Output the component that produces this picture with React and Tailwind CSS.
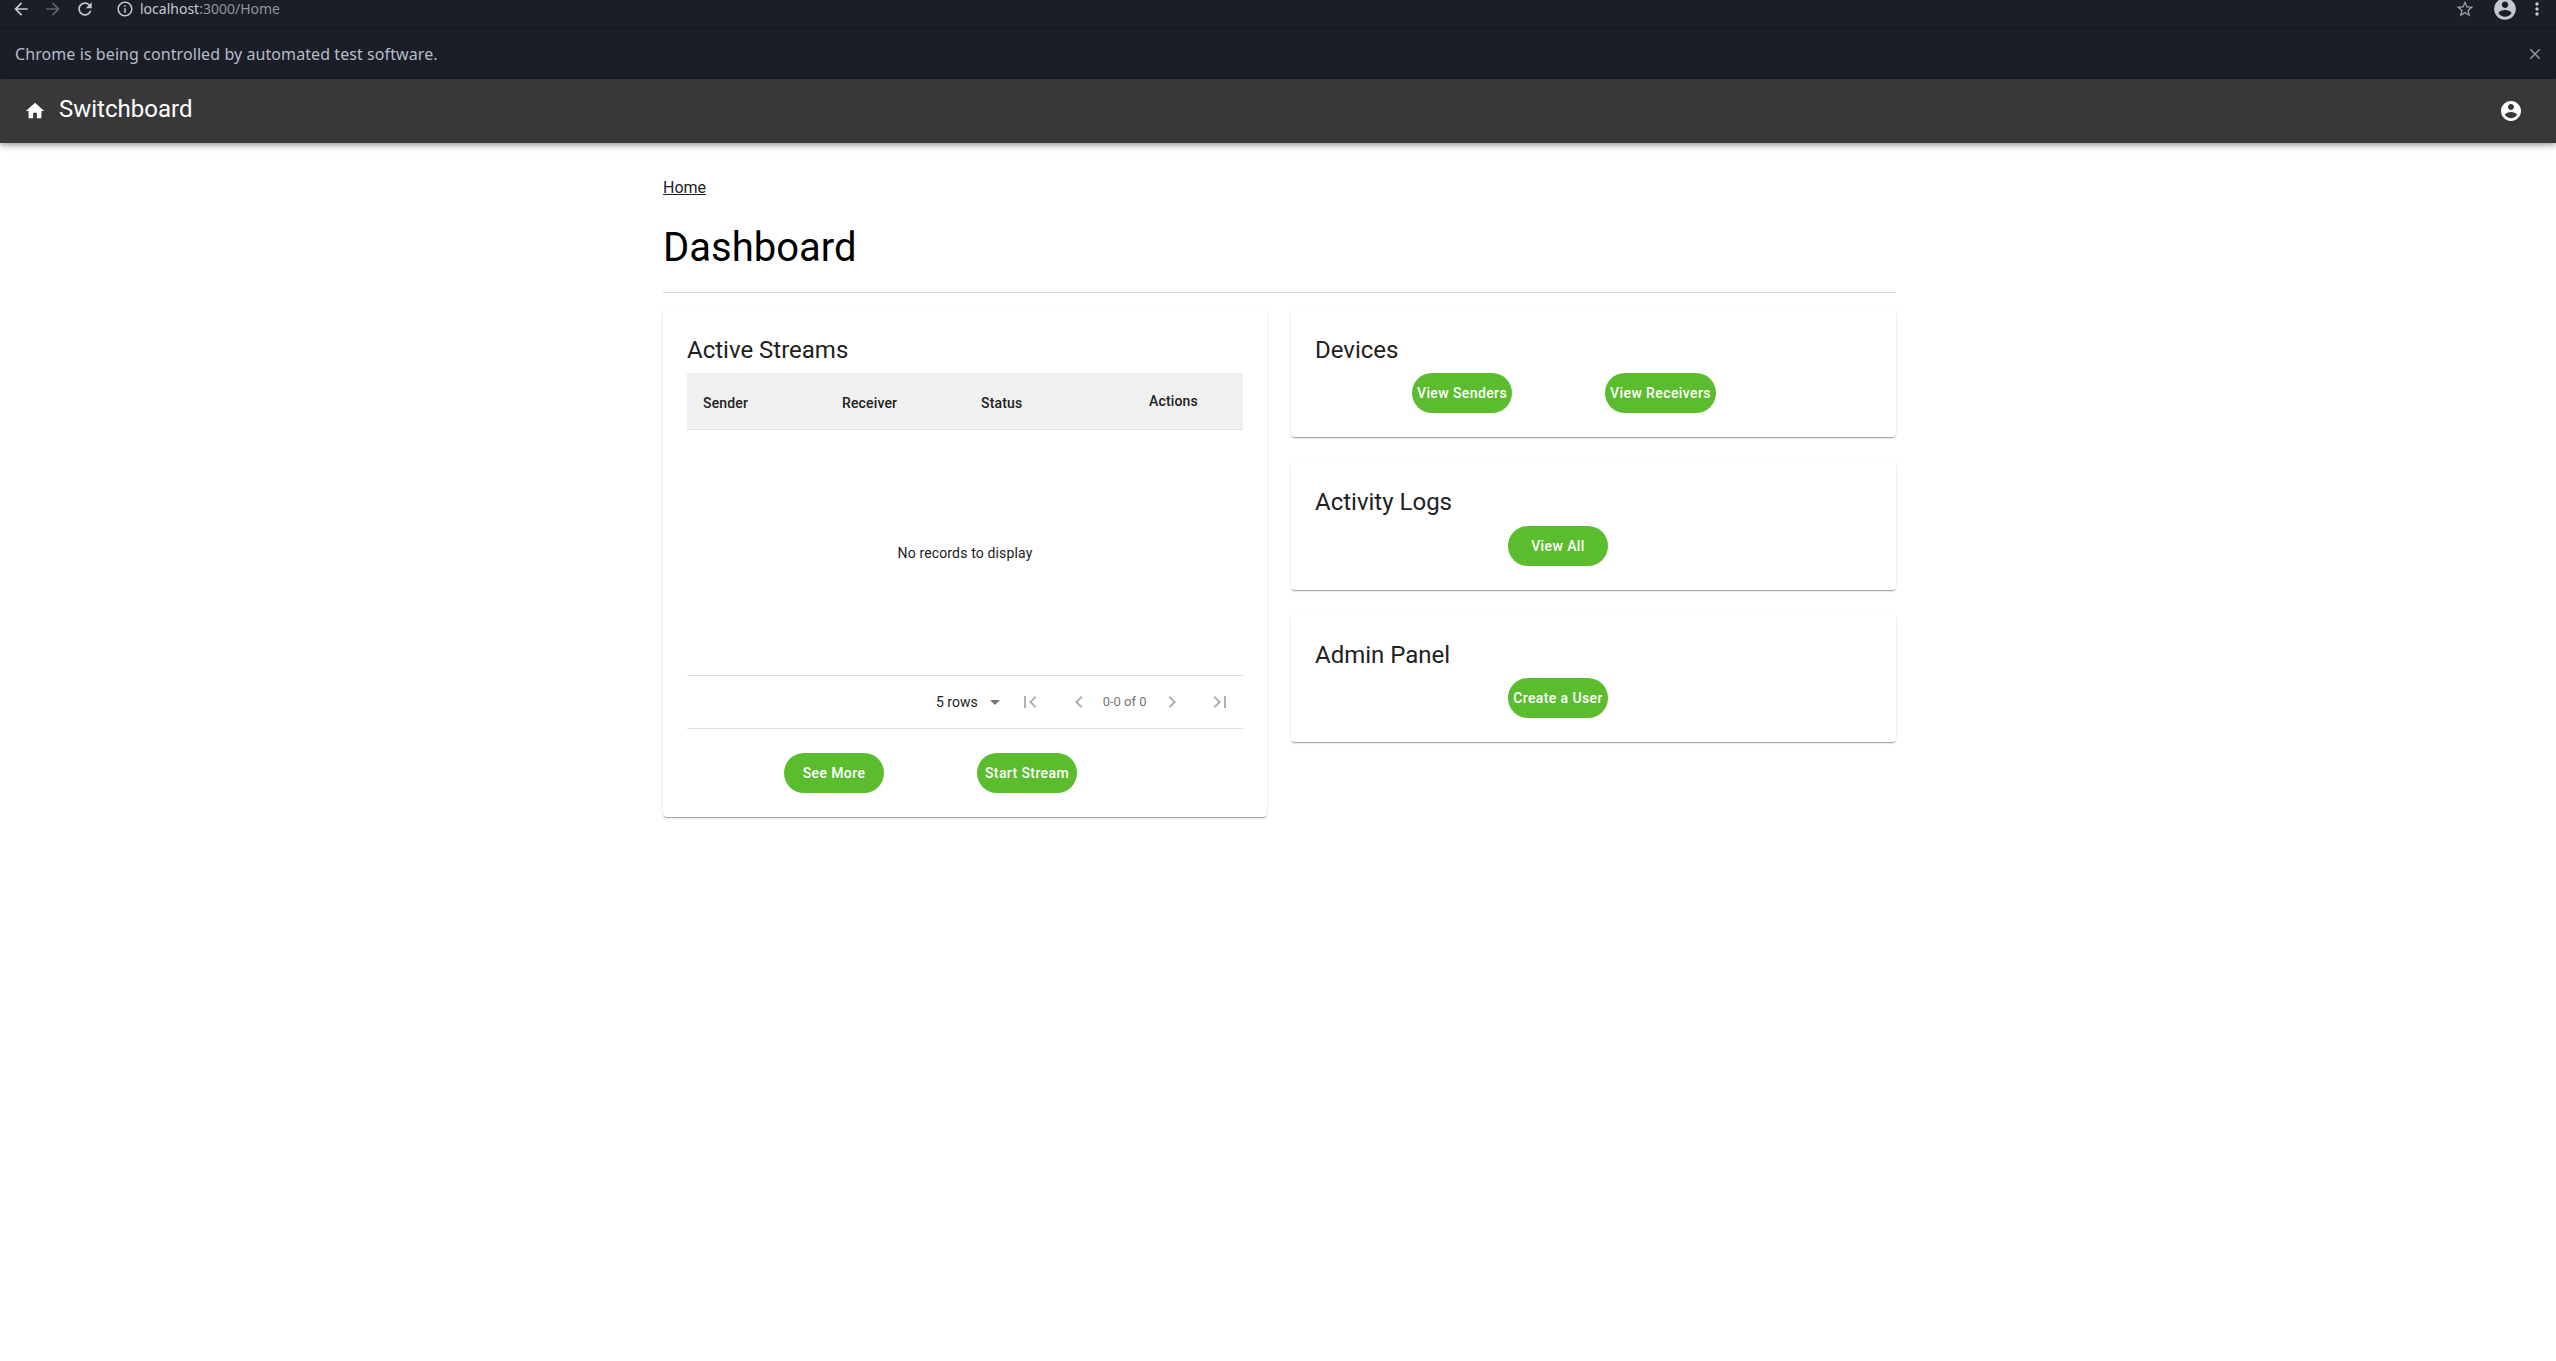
const paths = {
  back: "M20 11H7.83l5.59-5.59L12 4l-8 8 8 8 1.41-1.41L7.83 13H20v-2z",
  reload:
    "M17.65 6.35C16.2 4.9 14.21 4 12 4c-4.42 0-7.99 3.58-7.99 8s3.57 8 7.99 8c3.73 0 6.84-2.55 7.73-6h-2.08c-.82 2.33-3.04 4-5.65 4-3.31 0-6-2.69-6-6s2.69-6 6-6c1.66 0 3.14.69 4.22 1.78L13 11h7V4l-2.35 2.35z",
  info: "M11 7h2v2h-2zm0 4h2v6h-2zm1-9C6.48 2 2 6.48 2 12s4.48 10 10 10 10-4.48 10-10S17.52 2 12 2zm0 18c-4.41 0-8-3.59-8-8s3.59-8 8-8 8 3.59 8 8-3.59 8-8 8z",
  star: "M22 9.24l-7.19-.62L12 2 9.19 8.63 2 9.24l5.46 4.73L5.82 21 12 17.27 18.18 21l-1.63-7.03L22 9.24zM12 15.4l-3.76 2.27 1-4.28-3.32-2.88 4.38-.38L12 6.1l1.71 4.04 4.38.38-3.32 2.88 1 4.28L12 15.4z",
  dots: "M12 8c1.1 0 2-.9 2-2s-.9-2-2-2-2 .9-2 2 .9 2 2 2zm0 2c-1.1 0-2 .9-2 2s.9 2 2 2 2-.9 2-2-.9-2-2-2zm0 6c-1.1 0-2 .9-2 2s.9 2 2 2 2-.9 2-2-.9-2-2-2z",
  close:
    "M19 6.41L17.59 5 12 10.59 6.41 5 5 6.41 10.59 12 5 17.59 6.41 19 12 13.41 17.59 19 19 17.59 13.41 12z",
  home: "M10 20v-6h4v6h5v-8h3L12 3 2 12h3v8z",
  account:
    "M12 2C6.48 2 2 6.48 2 12s4.48 10 10 10 10-4.48 10-10S17.52 2 12 2zm0 3c1.66 0 3 1.34 3 3s-1.34 3-3 3-3-1.34-3-3 1.34-3 3-3zm0 14.2c-2.5 0-4.71-1.28-6-3.22.03-1.99 4-3.08 6-3.08 1.99 0 5.97 1.09 6 3.08-1.29 1.94-3.5 3.22-6 3.22z",
  first: "M18.41 16.59L13.82 12l4.59-4.59L17 6l-6 6 6 6zM6 6h2v12H6z",
  prev: "M15.41 7.41L14 6l-6 6 6 6 1.41-1.41L10.83 12z",
  next: "M10 6L8.59 7.41 13.17 12l-4.58 4.59L10 18l6-6z",
  last: "M5.59 7.41L10.18 12l-4.59 4.59L7 18l6-6-6-6zM16 6h2v12h-2z",
  drop: "M7 10l5 5 5-5z",
};

const Icon = ({ name, className }) => (
  <svg viewBox="0 0 24 24" fill="currentColor" className={className}>
    <path d={paths[name]} />
  </svg>
);

const GreenButton = ({ children, className = "" }) => (
  <button
    className={`h-10 rounded-[20px] bg-[#5bbc2e] text-[14px] font-medium tracking-[0.4px] text-white flex items-center justify-center shrink-0 ${className}`}
  >
    {children}
  </button>
);

const Card = ({ title, children }) => (
  <div className="bg-white rounded p-6 shadow-[0_2px_1px_-1px_rgba(0,0,0,0.2),0_1px_1px_0_rgba(0,0,0,0.14),0_1px_3px_0_rgba(0,0,0,0.12)]">
    <h2 className="pt-px text-[24px] leading-8 text-[#212121]">{title}</h2>
    {children}
  </div>
);

const ChromeBars = () => (
  <div className="bg-[#1b1e27] font-['Noto_Sans',sans-serif]">
    <div className="h-[28px] flex items-start border-b border-[#14161c] relative">
      <Icon name="back" className="w-5 h-5 -mt-px ml-[11px] text-[#c4c9d0]" />
      <Icon name="back" className="w-5 h-5 -mt-px ml-3 text-[#5f636b] rotate-180" />
      <Icon name="reload" className="w-5 h-5 -mt-px ml-3 text-[#c4c9d0]" />
      <Icon name="info" className="w-[18px] h-[18px] ml-[21px] text-[#c4c9d0]" />
      <span className="ml-[6px] text-[14px] leading-[18px] text-[#8f949c]">
        <span className="text-[#c4c9d0]">localhost</span>:3000/Home
      </span>
      <div className="ml-auto flex items-start">
        <Icon name="star" className="w-5 h-5 -mt-px text-[#9a9ea6]" />
        <Icon name="account" className="w-[26px] h-[26px] -mt-1 ml-[17px] mr-px text-[#c4c9d0]" />
        <Icon name="dots" className="w-5 h-5 -mt-px ml-2 mr-[9px] text-[#c4c9d0]" />
      </div>
    </div>
    <div className="h-[51px] flex items-center justify-between pl-[15px] pr-[12px]">
      <span className="text-[16px] tracking-[0.08px] text-[#b4bcc7]">
        Chrome is being controlled by automated test software.
      </span>
      <Icon name="close" className="w-[18px] h-[18px] text-[#8f949c]" />
    </div>
  </div>
);

const AppBar = () => (
  <header className="relative h-16 bg-[#383838] text-white flex items-center pl-[24px] pr-[33px] shadow-[0_2px_4px_-1px_rgba(0,0,0,0.2),0_4px_5px_0_rgba(0,0,0,0.14),0_1px_10px_0_rgba(0,0,0,0.12)]">
    <Icon name="home" className="w-[22px] h-[22px]" />
    <span className="ml-[13px] text-[24px] leading-8 -mt-[5px]">Switchboard</span>
    <Icon name="account" className="w-6 h-6 ml-auto" />
  </header>
);

const ActiveStreams = () => (
  <Card title="Active Streams">
    <div className="mt-[7px] h-[57px] pt-[4px] bg-[#f0f0f0] border-b border-[#e0e0e0] grid grid-cols-4 items-center text-[14px] font-medium tracking-[0.15px] text-[#212121]">
      <span className="pl-4">Sender</span>
      <span className="pl-4">Receiver</span>
      <span className="pl-4">Status</span>
      <span className="text-center -mt-1">Actions</span>
    </div>
    <div className="h-[245px] pt-[2px] flex items-center justify-center text-[14px] tracking-[0.15px] text-[#212121]">
      No records to display
    </div>
    <div className="h-[54px] border-y border-[#e0e0e0] flex items-center text-[14px] text-[#212121]">
      <span className="ml-[249px]">5 rows</span>
      <Icon name="drop" className="w-6 h-6 ml-[5px] text-[#757575]" />
      <Icon name="first" className="w-6 h-6 ml-[11px] text-[#b0b0b0]" />
      <Icon name="prev" className="w-6 h-6 ml-[25px] text-[#b0b0b0]" />
      <span className="ml-[12px] text-[13px] text-[#757575]">0-0 of 0</span>
      <Icon name="next" className="w-6 h-6 ml-[13px] text-[#b0b0b0]" />
      <Icon name="last" className="w-6 h-6 ml-[24px] text-[#b0b0b0]" />
    </div>
    <div className="mt-6 flex gap-[93px] pl-[97px]">
      <GreenButton className="w-[100px]">See More</GreenButton>
      <GreenButton className="w-[100px]">Start Stream</GreenButton>
    </div>
  </Card>
);

export default function App() {
  return (
    <div className="min-h-[1361px] bg-white font-['Roboto',sans-serif]">
      <ChromeBars />
      <AppBar />
      <main className="ml-[663px] w-[1233px] pt-[33px]">
        <a className="block text-[16px] leading-6 text-[#212121] underline">Home</a>
        <h1 className="mt-6 text-[40px] leading-[48px] text-black">Dashboard</h1>
        <hr className="mt-[20px] border-[#d6d6d6]" />
        <div className="mt-4 grid grid-cols-[604px_605px] gap-6 items-start">
          <ActiveStreams />
          <div className="flex flex-col gap-6">
            <Card title="Devices">
              <div className="mt-[7px] flex gap-[93px] pl-[97px]">
                <GreenButton className="w-[100px]">View Senders</GreenButton>
                <GreenButton className="w-[111px]">View Receivers</GreenButton>
              </div>
            </Card>
            <Card title="Activity Logs">
              <div className="mt-2 pl-[193px]">
                <GreenButton className="w-[100px]">View All</GreenButton>
              </div>
            </Card>
            <Card title="Admin Panel">
              <div className="mt-[7px] pl-[193px]">
                <GreenButton className="w-[100px]">Create a User</GreenButton>
              </div>
            </Card>
          </div>
        </div>
      </main>
    </div>
  );
}
